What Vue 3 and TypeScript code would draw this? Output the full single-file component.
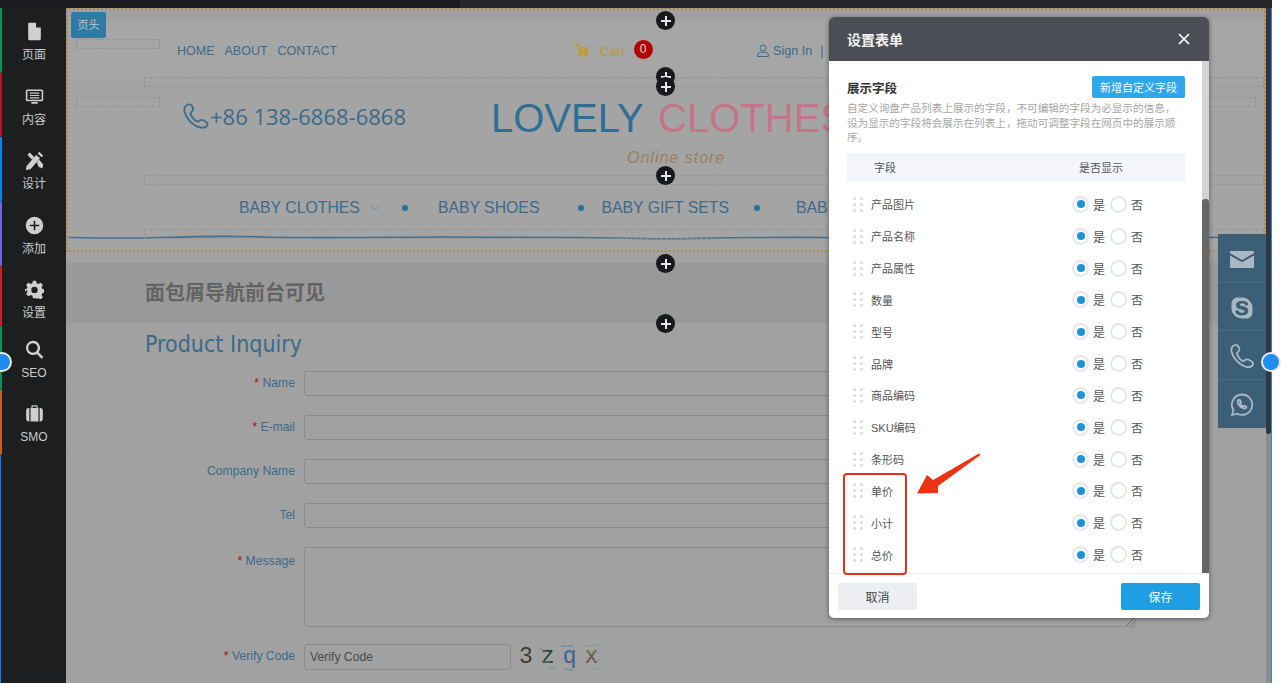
<template>
  <div class="editor">
    <div class="top-bar"><span class="top-tab" /></div>
    <div class="workspace">
      <aside class="side-nav">
        <div
          v-for="item in navItems"
          :key="item.label"
          class="nav-item"
          :style="{ borderLeftColor: item.edge }"
        >
          <svg class="nav-icon" viewBox="0 0 24 24" fill="#cfcfcf">
            <path v-for="(d, i) in item.paths" :key="i" :d="d" fill-rule="evenodd" />
          </svg>
          <span>{{ item.label }}</span>
        </div>
      </aside>

      <main class="canvas">
        <section class="site-header">
          <div class="tag">页头</div>
          <div class="top-row">
            <nav class="top-links">
              <span>HOME</span><span>ABOUT</span><span>CONTACT</span>
            </nav>
            <div class="cart">
              <svg width="14" height="13" viewBox="0 0 14 13" fill="none" stroke="#c3982f" stroke-width="1.5">
                <path d="M0 1h3l1.6 7.5h7.4M4 4h9l-1 3H4.600" />
                <circle cx="5" cy="11" r="1" fill="#c3982f" />
                <circle cx="11" cy="11" r="1" fill="#c3982f" />
              </svg>
              <span class="cart-label">Cart</span>
              <span class="badge">0</span>
            </div>
            <div class="sign-in">
              <svg width="12" height="13" viewBox="0 0 12 13" fill="none" stroke="#3c6a8a" stroke-width="1">
                <circle cx="6" cy="4" r="3" />
                <path d="M.6 12.500v-1.500c0-2 2-2.800 5.400-2.800s5.400.8 5.400 2.800v1.500z" />
              </svg>
              <span>Sign In</span><span class="pipe">|</span>
            </div>
          </div>

          <div class="logo-row">
            <div class="phone">
              <svg width="26" height="26" viewBox="0 0 26 26" fill="none" stroke="#3c6a8a" stroke-width="1.800" stroke-linecap="round">
                <path d="M5 1.500C2 2.500 1 5 1.500 8.500 3 15 9.500 23 17.500 24.500c3 .5 6-.5 7-2.500.5-1.500-.5-2.500-2-3.500-2-1.200-3.500-2-5-1.500-1.500.8-2 2-3.500 1.500C11 17 8 13 7.500 10.500 7.500 9 9.500 8.500 10 7c.3-1.500-1-4-2-5-.8-.7-1.800-.9-3-.5z" />
              </svg>
              <span>+86 138-6868-6868</span>
            </div>
            <div class="brand">
              <div class="brand-name"><span>LOVELY</span> <span class="pink">CLOTHES</span></div>
              <div class="brand-sub">Online store</div>
            </div>
          </div>

          <nav class="main-menu">
            <span>BABY CLOTHES</span>
            <svg class="chev" width="8" height="5" viewBox="0 0 8 5" fill="none" stroke="#6c8799" stroke-width="1"><path d="M.5.500 4 4 7.500.500" /></svg>
            <i class="dot d1" />
            <span>BABY SHOES</span>
            <i class="dot d2" />
            <span>BABY GIFT SETS</span>
            <i class="dot d3" />
            <span>BABY</span>
          </nav>

          <svg class="wave" viewBox="0 0 1150 6" preserveAspectRatio="none" fill="none" stroke="#456f8e" stroke-width="1.600">
            <path d="M0 3.500C30 4 60 4.500 90 3.500s60-2 100-.5 120 0 170 0 100 .5 130 .5 60 2 110 1 70-1.500 130-1 110 .5 150 0 60 1 90 .5 100-1 180-.5" />
          </svg>

          <i class="slot" style="left: 8px; top: 29px; width: 84px" />
          <i class="slot" style="left: 76px; top: 67px; width: 1120px" />
          <i class="slot" style="left: 8px; top: 87px; width: 84px" />
          <i class="slot" style="left: 1105px; top: 87px; width: 83px" />
          <i class="slot" style="left: 76px; top: 165px; width: 1120px" />
          <i class="slot" style="left: 76px; top: 219px; width: 1120px" />
        </section>

        <section class="crumbs">面包屑导航前台可见</section>

        <section class="inquiry">
          <h2>Product Inquiry</h2>
          <div v-for="f in fields" :key="f.label" class="form-row">
            <label :class="{ tall: f.area }"><em v-if="f.required">*</em> {{ f.label }}</label>
            <div class="input" :class="{ area: f.area }">
              <svg v-if="f.area" class="resize-mark" width="9" height="9" viewBox="0 0 9 9" stroke="#6f6f6f" stroke-width="1"><path d="M1 8l7-7M5 8l3-3" /></svg>
            </div>
          </div>
          <div class="form-row verify">
            <label><em>*</em> Verify Code</label>
            <div class="input code">Verify Code</div>
            <div class="captcha">
              <span class="c1">3</span><span class="c2">z</span><span class="c3">q</span><span class="c4">x</span>
              <svg class="noise" width="90" height="28" viewBox="0 0 90 28" fill="none" stroke-width="0.800">
                <path d="M20 4l8 4M22 17l10 2M30 24l6-1" stroke="#6f8f6f" />
                <path d="M42 2h12M44 9l10-1M46 25l8 1" stroke="#4f7fa0" />
                <path d="M66 2l14-1M68 7l12 2M72 17l10-1M74 24l8 2" stroke="#7f9a7f" />
              </svg>
            </div>
          </div>
        </section>

        <button v-for="y in plusSpots" :key="y" class="plus" :style="{ top: y + 'px' }">
          <svg width="10" height="10" viewBox="0 0 10 10" stroke="#e8e8e8" stroke-width="2"><path d="M5 0v10M0 5h10" /></svg>
        </button>

        <div class="contact-bar">
          <div v-for="c in contacts" :key="c.name" class="contact-item">
            <svg width="26" height="26" viewBox="0 0 26 26" v-bind="c.attrs">
              <path v-for="(d, i) in c.paths" :key="i" :d="d" fill-rule="evenodd" />
            </svg>
          </div>
        </div>
      </main>

      <div class="page-scroll"><span /></div>
    </div>

    <i class="handle left" />
    <i class="handle right" />

    <div class="dialog">
      <header class="dialog-head">
        <span>设置表单</span>
        <svg width="12" height="12" viewBox="0 0 12 12" stroke="#fff" stroke-width="1.700"><path d="M1 1l10 10M11 1 1 11" /></svg>
      </header>
      <div class="dialog-body">
        <div class="dialog-scroll"><span /></div>
        <div class="dialog-main">
          <div class="title-row">
            <strong>展示字段</strong>
            <button class="add-btn">新增自定义字段</button>
          </div>
          <p class="hint">自定义询盘产品列表上展示的字段，不可编辑的字段为必显示的信息，设为显示的字段将会展示在列表上，拖动可调整字段在网页中的展示顺序。</p>
          <div class="table-head">
            <span>字段</span>
            <span>是否显示</span>
          </div>
          <div v-for="name in rows" :key="name" class="field-row">
            <span class="grip"><i v-for="n in 6" :key="n" /></span>
            <span class="field-name">{{ name }}</span>
            <span class="radio on" /><span class="opt">是</span>
            <span class="radio" /><span class="opt">否</span>
          </div>
        </div>
      </div>
      <footer class="dialog-foot">
        <button class="cancel">取消</button>
        <button class="save">保存</button>
      </footer>
    </div>

    <div class="mark-box" />
    <svg class="mark-arrow" width="66" height="46" viewBox="0 0 66 46">
      <path d="M63 .5 64.500 2 22 33v7L1 40.500 11 22l6 5z" fill="#ee3312" />
    </svg>
  </div>
</template>

<script setup lang="ts">
interface NavItem {
  label: string
  edge: string
  paths: string[]
}

const navItems: NavItem[] = [
  { label: '页面', edge: '#0c8f58', paths: ['M5 1h9l6 6v14a2 2 0 0 1-2 2H6a2 2 0 0 1-2-2V2a1 1 0 0 1 1-1zM14 1v6h6z'] },
  { label: '内容', edge: '#b3122e', paths: ['M3 3h18a2 2 0 0 1 2 2v11a2 2 0 0 1-2 2H3a2 2 0 0 1-2-2V5a2 2 0 0 1 2-2zM3 5v11h18V5zM6 7h12v1.500H6zM6 10h12v1.500H6zM6 13h12v1.500H6zM8 19h8v2H8z'] },
  { label: '设计', edge: '#0a84e8', paths: ['M2 19 14 5l5 4L7 23l-6 1zM16 3l2-2 5 5-2 2zM3 5l3-3 6 6-3 3zM15 14l3-3 5 6-1 5-5-2z'] },
  { label: '添加', edge: '#6a6ad8', paths: ['M12 1a11 11 0 1 1 0 22 11 11 0 0 1 0-22zM11 6v5H6v2h5v5h2v-5h5v-2h-5V6z'] },
  { label: '设置', edge: '#c42128', paths: ['M10 1h4l.7 3.200 2.200.9L19.700 3.400l2.900 2.900-1.700 2.800.9 2.200 3.200.7v4l-3.200.7-.9 2.200 1.700 2.800-2.900 2.900-2.800-1.700-2.200.9L14 23h-4l-.7-3.200-2.200-.9-2.800 1.700-2.900-2.900 1.700-2.800-.9-2.200L-1 15.900v-4l3.200-.7.9-2.200-1.700-2.800 2.900-2.900 2.800 1.700 2.200-.9zM12 8.500a4 4 0 1 0 0 8 4 4 0 0 0 0-8z'] },
  { label: 'SEO', edge: '#0c8f58', paths: ['M10 1a9 9 0 0 1 7.200 14.400l6 6-2.300 2.300-6-6A9 9 0 1 1 10 1zM10 4a6 6 0 1 0 0 12 6 6 0 0 0 0-12z'] },
  { label: 'SMO', edge: '#c2602e', paths: ['M8 3a1.500 1.500 0 0 1 1.500-1.500h5A1.500 1.500 0 0 1 16 3v2h-1.500V3h-5v2H8zM7 5h10v17H7zM4 5h1.500v17H4a3 3 0 0 1-2.500-3V8A3 3 0 0 1 4 5zM18.500 5H20a3 3 0 0 1 2.500 3v11a3 3 0 0 1-2.500 3h-1.500z'] },
]

const fields = [
  { label: 'Name', required: true },
  { label: 'E-mail', required: true },
  { label: 'Company Name' },
  { label: 'Tel' },
  { label: 'Message', required: true, area: true },
]

// y positions relative to the canvas, these buttons sit on the section seams
const plusSpots = [3, 59, 69, 158, 246, 306]

const filled = { fill: '#a9b8c3' }
const outlined = { fill: 'none', stroke: '#a9b8c3', 'stroke-width': 1.8, 'stroke-linecap': 'round' as const }

const contacts = [
  { name: 'mail', attrs: filled, paths: ['M2 5h22a1 1 0 0 1 1 1v1.200L13 14 1 7.200V6a1 1 0 0 1 1-1zM1 9.500l12 6.800 12-6.800V21a1 1 0 0 1-1 1H2a1 1 0 0 1-1-1z'] },
  { name: 'skype', attrs: filled, paths: ['M13 2.500a10.500 10.500 0 0 1 10.300 12.700 6.500 6.500 0 0 1-8.100 8.100A10.500 10.500 0 0 1 2.700 10.800 6.500 6.500 0 0 1 10.800 2.700c.7-.1 1.500-.2 2.200-.2zM13 6c-3.500 0-6 1.500-6 4.200 0 5 8.500 3.500 8.500 6 0 1-1 1.600-2.500 1.600-3.200 0-3-2.600-5-2.600-1 0-1.600.7-1.600 1.500C6.400 18.500 9 20.400 13 20.400c4 0 6.300-1.800 6.300-4.600 0-5.300-8.500-3.900-8.500-6 0-.9.900-1.400 2.300-1.400 2.800 0 2.700 2 4.500 2 1 0 1.600-.6 1.600-1.500C19.200 7.700 16.600 6 13 6z'] },
  { name: 'phone', attrs: outlined, paths: ['M6 2C3 3 2 5.500 2.500 8.500 4 15 10 22 17.500 24c3 .5 5.500-.5 6.500-2.500.5-1.500-.5-2.500-2-3.500-2-1.200-3.500-2-5-1.500-1.500.8-2 2-3.500 1.500C11 17 8.500 13 8 10.500 8 9 10 8.500 10.500 7c.3-1.500-1-3.500-2-4.500-.8-.7-1.500-.9-2.500-.5z'] },
  { name: 'whatsapp', attrs: outlined, paths: ['M13 2.500a10.200 10.200 0 1 1-5 19.100L3 23l1.500-4.800A10.200 10.200 0 0 1 13 2.500zM9.500 8c-1 1-1 2.500 0 4.300 1.200 2 3 3.600 5 4.200 1.500.3 2.700-.3 3-1.500l-2.200-1.300-1 1c-1.300-.5-2.700-1.900-3.300-3.300l1-1L10.800 8z'] },
]

const rows = ['产品图片', '产品名称', '产品属性', '数量', '型号', '品牌', '商品编码', 'SKU编码', '条形码', '单价', '小计', '总价']
</script>

<style>
body {
  background: #fff;
}
</style>

<style scoped>
.editor {
  position: relative;
  width: 1281px;
  height: 683px;
  overflow: hidden;
  display: flex;
  flex-direction: column;
  background: #fff;
  font-family: "Liberation Sans", "Noto Sans CJK SC", sans-serif;
}

.top-bar {
  height: 8px;
  width: 1272px;
  background: #23262b;
  flex: none;
}

.top-tab {
  display: block;
  width: 460px;
  height: 8px;
  background: #1b1c1f;
}

.workspace {
  flex: 1;
  display: flex;
  width: 1271px;
  min-height: 0;
  border-right: 1px solid #1f8df0;
  box-sizing: content-box;
}

.side-nav {
  width: 66px;
  flex: none;
  background: #1c1e20;
  box-shadow: inset 1px 0 #0a84e8;
  box-sizing: border-box;
}

.nav-item {
  height: 64.500px;
  box-sizing: border-box;
  border-left: 2px solid #0a84e8;
  border-bottom: 1px solid #212325;
  display: flex;
  flex-direction: column;
  align-items: center;
  padding-top: 14px;
  color: #cbcbcb;
  font-size: 12px;
  line-height: 15px;
}

.nav-item:nth-child(5) {
  height: 59.500px;
}

.nav-icon {
  width: 19px;
  height: 19px;
  margin-bottom: 7px;
}

.canvas {
  position: relative;
  flex: 1;
  min-width: 0;
  background: #a1a1a1;
  overflow: hidden;
}

.site-header {
  position: relative;
  height: 244px;
  box-sizing: border-box;
  border: 2px dotted #b08a45;
  background: #a4a4a4;
}

.tag {
  position: absolute;
  left: 3px;
  top: 2px;
  width: 35px;
  height: 26px;
  background: #2f7ba3;
  border-radius: 2px;
  color: #b9c9d3;
  font-size: 11px;
  line-height: 26px;
  text-align: center;
}

.top-row {
  height: 67px;
  display: flex;
  align-items: center;
  color: #3c6a8a;
  font-size: 13px;
  padding-left: 109px;
  padding-top: 14px;
  box-sizing: border-box;
  background: linear-gradient(#a1a1a1 10px, #a6a6a6 10px);
}

.top-links {
  display: flex;
  gap: 10px;
  width: 398px;
  font-size: 12.500px;
}

.cart {
  display: flex;
  align-items: center;
  width: 182px;
}

.cart-label {
  color: #c3982f;
  margin: 2px 0 0 11px;
  font-size: 13px;
}

.badge {
  width: 19px;
  height: 19px;
  margin: -3px 0 0 9px;
  background: #b30000;
  border-radius: 50%;
  color: #e8dede;
  font-size: 12px;
  line-height: 19px;
  text-align: center;
}

.sign-in {
  display: flex;
  align-items: center;
  gap: 4px;
  font-size: 12.600px;
}

.pipe {
  margin-left: 4px;
}

.logo-row {
  display: flex;
  height: 100px;
  padding-left: 115px;
}

.phone {
  display: flex;
  align-items: center;
  gap: 1px;
  width: 308px;
  height: 26px;
  margin-top: 26px;
  color: #3c6a8a;
  font-family: "Open Sans", sans-serif;
  font-size: 22px;
  white-space: nowrap;
}

.brand {
  white-space: nowrap;
}

.brand-name {
  margin-top: 17px;
  color: #2f6f94;
  font-size: 40px;
  line-height: 48px;
  word-spacing: 4px;
  font-family: "Liberation Sans", sans-serif;
}

.pink {
  color: #c4758a;
}

.brand-sub {
  margin: 6px 0 0 136px;
  color: #97835f;
  font-size: 16px;
  line-height: 20px;
  font-style: italic;
  letter-spacing: 1px;
}

.main-menu {
  display: flex;
  align-items: center;
  padding: 18px 0 0 171px;
  height: 44px;
  box-sizing: border-box;
  color: #3c6a8a;
  font-size: 15.800px;
  white-space: nowrap;
}

.chev {
  margin-left: 11px;
}

.dot {
  width: 6px;
  height: 6px;
  border-radius: 50%;
  background: #2f6f96;
}

.d1 {
  margin: 0 30px 0 23px;
}

.d2 {
  margin: 0 17px 0 39px;
}

.d3 {
  margin: 0 36px 0 25px;
}

.wave {
  display: block;
  width: 100%;
  height: 6px;
  margin-top: 13px;
}

.slot {
  position: absolute;
  height: 10px;
  box-sizing: border-box;
  border: 1px dashed #8f8f8f;
  opacity: 0.7;
}

.crumbs {
  margin-top: 11px;
  height: 60px;
  padding-left: 79px;
  background: #999;
  color: #636363;
  font-size: 20px;
  font-weight: 700;
  line-height: 60px;
}

.inquiry {
  padding: 6px 0 0 79px;
}

.inquiry h2 {
  margin: 0 0 12px;
  color: #3c6a8a;
  font-family: "DejaVu Sans", sans-serif;
  font-stretch: condensed;
  font-size: 23px;
  font-weight: 400;
  line-height: 30px;
}

.form-row {
  display: flex;
  margin-bottom: 19px;
  margin-left: -79px;
}

.form-row label {
  width: 229px;
  flex: none;
  text-align: right;
  color: #3c6a8a;
  font-size: 12.200px;
  line-height: 25px;
}

.form-row label.tall {
  line-height: 29px;
}

.form-row em {
  color: #a80d0d;
  font-style: normal;
}

.input {
  position: relative;
  width: 832px;
  height: 25px;
  margin-left: 9px;
  box-sizing: border-box;
  border: 1px solid #8b8b8b;
  border-radius: 3px;
}

.input.area {
  height: 80px;
}

.resize-mark {
  position: absolute;
  right: 0;
  bottom: 0;
}

.verify {
  margin-top: -2px;
}

.input.code {
  width: 207px;
  height: 26px;
  padding-left: 5px;
  color: #4a4a4a;
  font-size: 12.200px;
  line-height: 24px;
}

.captcha {
  position: relative;
  display: flex;
  gap: 8px;
  margin-left: 8px;
  font-family: "Liberation Mono", monospace;
  font-size: 23px;
  line-height: 26px;
}

.noise {
  position: absolute;
  left: 0;
  top: 0;
}

.c1 { color: #3f3a33; }
.c2 { color: #2f3a3a; }
.c3 { color: #3d5f9c; }
.c4 { color: #6e5546; }

.plus {
  position: absolute;
  left: 590px;
  width: 19px;
  height: 19px;
  padding: 0;
  border: 0;
  border-radius: 50%;
  background: #17191c;
  display: flex;
  align-items: center;
  justify-content: center;
}

.contact-bar {
  position: absolute;
  right: 0;
  top: 226px;
  width: 48px;
  background: #3c5f78;
}

.contact-item {
  height: 48.500px;
  padding-top: 3px;
  display: flex;
  align-items: center;
  justify-content: center;
  border-bottom: 1px solid #4a6b83;
  box-sizing: border-box;
}

.contact-item:last-child {
  border-bottom: 0;
}

.page-scroll {
  width: 5px;
  flex: none;
  background: #8d8d8d;
}

.page-scroll span {
  display: block;
  height: 426px;
  background: #33373b;
  border-radius: 0 0 3px 3px;
}

.handle {
  position: absolute;
  top: 352px;
  width: 20px;
  height: 20px;
  box-sizing: border-box;
  background: #1f8df0;
  border: 2px solid #e9e9e9;
  border-radius: 50%;
}

.handle.left {
  left: -8px;
}

.handle.right {
  left: 1261px;
}

.dialog {
  position: absolute;
  left: 829px;
  top: 17px;
  width: 380px;
  height: 601px;
  display: flex;
  flex-direction: column;
  border-radius: 5px;
  overflow: hidden;
  background: #fff;
  box-shadow: 0 1px 5px rgba(0, 0, 0, 0.45);
}

.dialog-head {
  height: 44px;
  flex: none;
  display: flex;
  align-items: center;
  justify-content: space-between;
  padding: 0 19px 0 18px;
  background: #4b4e55;
  color: #f4f4f4;
  font-size: 14px;
  font-weight: 700;
}

.dialog-body {
  flex: 1;
  min-height: 0;
  display: flex;
  flex-direction: row-reverse;
  border-bottom: 1px solid #ececec;
}

.dialog-scroll {
  width: 7px;
  flex: none;
  background: #d4d4d4;
  position: relative;
}

.dialog-scroll span {
  position: absolute;
  left: 0;
  right: 0;
  top: 138px;
  bottom: 0;
  background: #666;
  border-radius: 3px 3px 0 0;
}

.dialog-main {
  flex: 1;
  min-width: 0;
  padding: 15px 17px 0 18px;
  overflow: hidden;
}

.title-row {
  display: flex;
  align-items: center;
  justify-content: space-between;
  color: #333;
  font-size: 12.500px;
}

.add-btn {
  width: 93px;
  height: 22px;
  padding: 0;
  border: 0;
  border-radius: 2px;
  background: #2ea7ec;
  color: #f2f9fd;
  font-family: inherit;
  font-size: 11px;
}

.hint {
  margin: 3px 0 0;
  max-width: 336px;
  color: #a6a6a6;
  font-size: 10.600px;
  line-height: 14.500px;
}

.table-head {
  display: flex;
  align-items: center;
  height: 28px;
  margin-top: 8px;
  padding-left: 27px;
  background: #f3f5fa;
  color: #555;
  font-size: 11px;
}

.table-head span:last-child {
  margin-left: 183px;
}

.field-row {
  display: flex;
  align-items: center;
  height: 31.840px;
  color: #555;
  font-size: 11px;
}

.table-head + .field-row {
  margin-top: 8px;
}

.grip {
  display: grid;
  grid-template-columns: 3px 3px;
  gap: 3px 4px;
  width: 10px;
  margin: 0 8px 0 6px;
}

.grip i {
  width: 3px;
  height: 3px;
  background: #dcdcdc;
  border-radius: 50%;
}

.field-name {
  width: 201px;
}

.radio {
  width: 17px;
  height: 17px;
  box-sizing: border-box;
  border: 2px solid #e4e7eb;
  border-radius: 50%;
  background: #fff;
  position: relative;
}

.radio.on::after {
  content: "";
  position: absolute;
  left: 2.500px;
  top: 2.500px;
  width: 8px;
  height: 8px;
  border-radius: 50%;
  background: #1f94dc;
}

.opt {
  width: 21px;
  padding-left: 4px;
  box-sizing: border-box;
  font-size: 12px;
}

.dialog-foot {
  height: 44px;
  flex: none;
  display: flex;
  align-items: center;
  justify-content: space-between;
  padding: 0 9px;
}

.dialog-foot button {
  width: 79px;
  height: 27px;
  padding: 0;
  border: 0;
  border-radius: 2px;
  font-family: inherit;
  font-size: 12px;
}

.cancel {
  background: #eceef1;
  color: #444;
}

.save {
  background: #1f9fe3;
  color: #f2f9fd;
}

.mark-box {
  position: absolute;
  left: 843px;
  top: 473px;
  width: 64px;
  height: 102px;
  box-sizing: border-box;
  border: 2px solid #e8301a;
  border-radius: 4px;
}

.mark-arrow {
  position: absolute;
  left: 916px;
  top: 453px;
}
</style>
